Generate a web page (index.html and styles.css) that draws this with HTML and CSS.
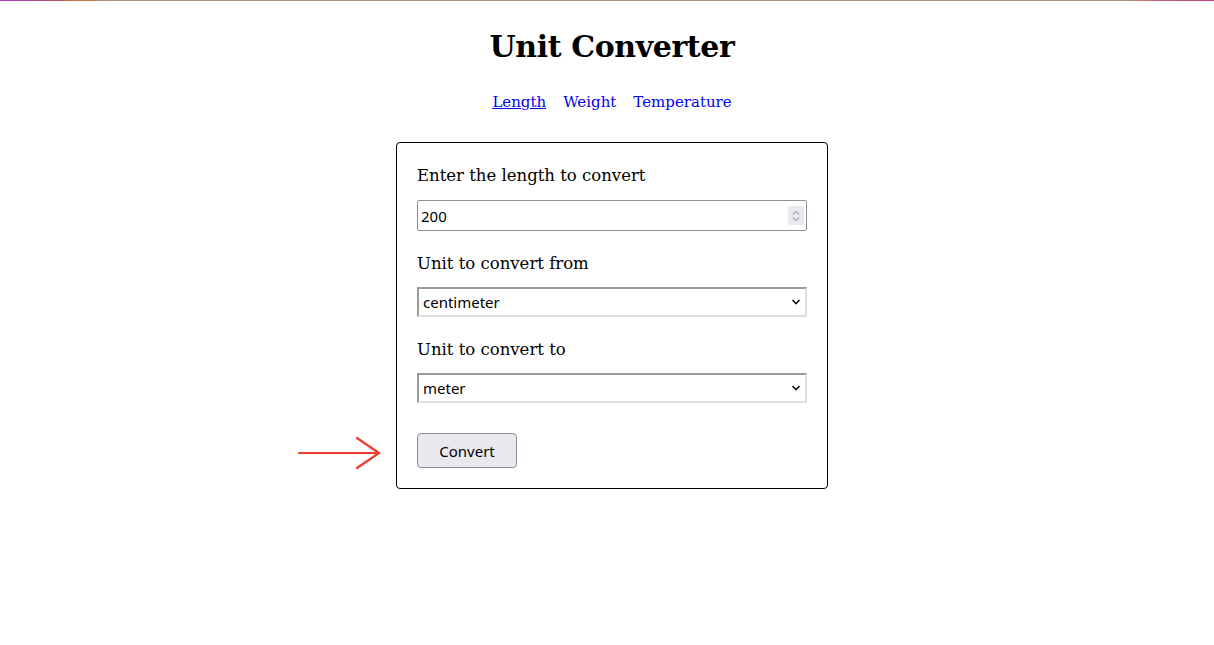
FILE: index.html
```html
<!DOCTYPE html>
<html lang="en">
<head>
<meta charset="utf-8">
<title>Unit Converter</title>
<link rel="stylesheet" href="styles.css">
</head>
<body>
<div class="topline"></div>
<main class="page">
  <h1 class="title">Unit Converter</h1>
  <nav class="nav">
    <a href="#" class="nav-link active">Length</a>
    <a href="#" class="nav-link">Weight</a>
    <a href="#" class="nav-link">Temperature</a>
  </nav>
  <form class="card">
    <label class="label">Enter the length to convert</label>
    <div class="number">
      <span class="number-value">200</span>
      <span class="spinner">
        <svg width="10" height="14" viewBox="0 0 10 14"><path d="M2 5.5 L5 2.5 L8 5.5 M2 8.5 L5 11.5 L8 8.5" fill="none" stroke="#777" stroke-width="1"/></svg>
      </span>
    </div>
    <label class="label">Unit to convert from</label>
    <div class="select">
      <span>centimeter</span>
      <svg width="10" height="8" viewBox="0 0 10 8"><path d="M1.5 2 L5 5.5 L8.5 2" fill="none" stroke="#111" stroke-width="1.6"/></svg>
    </div>
    <label class="label">Unit to convert to</label>
    <div class="select">
      <span>meter</span>
      <svg width="10" height="8" viewBox="0 0 10 8"><path d="M1.5 2 L5 5.5 L8.5 2" fill="none" stroke="#111" stroke-width="1.6"/></svg>
    </div>
    <button type="button" class="button">Convert</button>
    <svg class="arrow" width="86" height="34" viewBox="0 0 86 34"><path d="M2 17 L81 17 M60 2 L82 17 L60 32" fill="none" stroke="#ee3b2b" stroke-width="2.2" stroke-linecap="round" stroke-linejoin="round"/></svg>
  </form>
</main>
</body>
</html>
```

FILE: styles.css
```css
html, body {
  margin: 0;
  padding: 0;
  background: #fff;
}
body {
  font-family: "DejaVu Serif", serif;
  color: #000;
}
.topline {
  height: 1px;
  background: linear-gradient(90deg, #a03cc0 0, #b4545c 60px, #c0784a 70px, #c07a4c 95px, #b89078 100px, #b89078 1130px, #c05a70 1160px, #c04080 1214px);
}
.page {
  padding-left: 10px;
}
.title {
  margin: 26px 0 0;
  text-align: center;
  font-size: 30px;
  line-height: 40px;
  font-weight: bold;
  letter-spacing: -0.4px;
}
.nav {
  display: flex;
  justify-content: center;
  gap: 17px;
  margin-top: 24px;
  font-size: 15px;
  line-height: 22px;
}
.nav-link {
  color: #0000ee;
  text-decoration: none;
}
.nav-link.active {
  text-decoration: underline;
}
.card {
  position: relative;
  width: 390px;
  margin: 29px auto 0;
  padding: 21px 20px 20px;
  border: 1px solid #000;
  border-radius: 4px;
  display: flex;
  flex-direction: column;
  align-items: flex-start;
}
.label {
  font-size: 16.5px;
  line-height: 24px;
}
.number {
  box-sizing: border-box;
  width: 390px;
  height: 31px;
  margin-top: 12px;
  margin-bottom: 21px;
  border: 1px solid #8f8f9d;
  border-radius: 2px;
  display: flex;
  align-items: center;
  justify-content: space-between;
  padding: 0 2px 0 3px;
  font-family: "Noto Sans", sans-serif;
  font-size: 15px;
}
.spinner {
  width: 16px;
  height: 19px;
  background: #e9e9ed;
  display: flex;
  align-items: center;
  justify-content: center;
  border-radius: 2px;
}
.select {
  box-sizing: border-box;
  width: 390px;
  height: 30px;
  margin-top: 11px;
  margin-bottom: 21px;
  border: 2px solid;
  border-color: #9a9a9a #e0e0e0 #e0e0e0 #9a9a9a;
  display: flex;
  align-items: center;
  justify-content: space-between;
  padding: 0 4px 0 4px;
  font-family: "Noto Sans", sans-serif;
  font-size: 15px;
}
.select + .button {
  margin-top: 9px;
}
.button {
  width: 100px;
  height: 35px;
  background: #e9e9ed;
  border: 1px solid #8f8f9d;
  border-radius: 4px;
  font-family: "Noto Sans", sans-serif;
  font-size: 15px;
  color: #000;
}
.arrow {
  position: absolute;
  left: -100px;
  top: 293px;
}
```
